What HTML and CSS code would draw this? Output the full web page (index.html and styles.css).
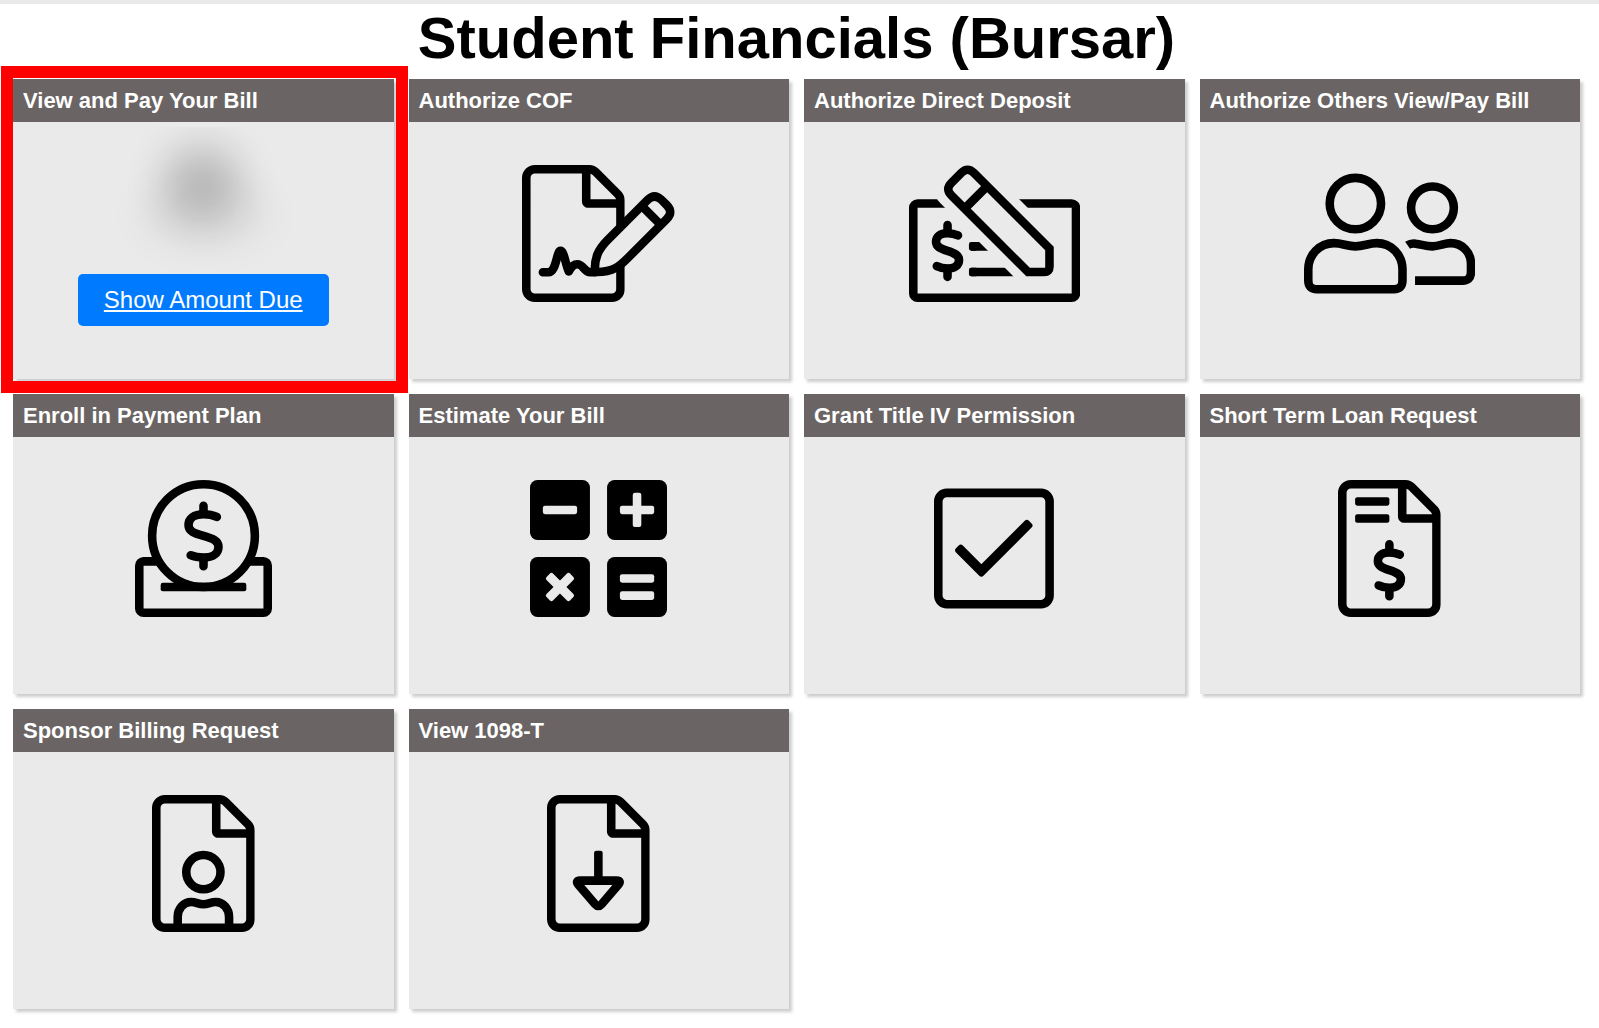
FILE: index.html
```html
<!DOCTYPE html>
<html lang="en">
<head>
  <meta charset="UTF-8">
  <meta name="viewport" content="width=device-width, initial-scale=1.0">
  <title>Student Financials (Bursar)</title>
  <link rel="stylesheet" href="styles.css">
</head>
<body>

  <!-- Shared icon parts -->
  <svg class="defs" width="0" height="0" aria-hidden="true">
    <symbol id="file" viewBox="0 0 384 512">
      <path fill="currentColor" d="M369.900 97.900L286 14C277 5 264.800 0 252.100 0H48C21.500 0 0 21.500 0 48v416c0 26.500 21.500 48 48 48h288c26.500 0 48-21.500 48-48V131.900c0-12.700-5.100-25-14.100-34zM347.300 120.600c2.100 2.100 3.500 4.600 4.200 7.400H256V32.500c2.800.7 5.300 2.100 7.400 4.200l83.900 83.900zM336 480H48c-8.800 0-16-7.200-16-16V48c0-8.800 7.200-16 16-16h176v104c0 13.300 10.700 24 24 24h104v304c0 8.800-7.200 16-16 16z"/>
    </symbol>
    <g id="dollar-small" class="line" stroke-linecap="round">
      <path d="M39 -58Q22 -66 0 -66C-28 -66 -43 -53 -43 -34C-43 -16 -28 -9 0 0C28 9 43 16 43 34C43 53 28 66 0 66Q-22 66 -40 57"/>
      <path d="M0 -97V-68M0 68V97"/>
    </g>
  </svg>

  <main class="page">
    <h1>Student Financials (Bursar)</h1>

    <div class="cards">
      <section class="card highlight">
        <h2>View and Pay Your Bill</h2>
        <div class="bill">
          <svg class="blurred" viewBox="0 0 300 147" aria-hidden="true">
            <ellipse cx="149" cy="56" rx="38" ry="38" opacity="0.2"/>
            <ellipse cx="152" cy="88" rx="66" ry="32" opacity="0.05"/>
          </svg>
          <a class="btn" href="#">Show Amount Due</a>
        </div>
      </section>

      <section class="card">
        <h2>Authorize COF</h2>
        <a class="icon" href="#" aria-label="Authorize COF">
          <svg viewBox="0 0 576 512">
            <use href="#file" width="384" height="512"/>
            <g class="line">
              <path stroke-linecap="round" stroke-linejoin="round" d="M78 401H98C130 401 128 321 144 321C158 321 162 372 175 398C186 378 194 371 206 371C232 371 230 401 256 401H272"/>
              <path class="filled" stroke-linejoin="round" d="M272 400C270 346 286 314 320 280L470 130Q495 105 521 130L541 150Q567 176 541 202L402 341C366 378 342 402 272 400Z"/>
              <path d="M446 151L520 225"/>
            </g>
          </svg>
        </a>
      </section>

      <section class="card">
        <h2>Authorize Direct Deposit</h2>
        <a class="icon" href="#" aria-label="Authorize Direct Deposit">
          <svg viewBox="0 0 640 512">
            <g class="line">
              <rect x="16" y="144" width="608" height="352" rx="16"/>
              <path d="M232 304H320M232 400H420"/>
            </g>
            <path d="M232 288h20v32h-20q-8 0-8-8v-16q0-8 8-8zM232 384h20v32h-20q-8 0-8-8v-16q0-8 8-8z"/>
            <use href="#dollar-small" x="144" y="321"/>
            <path class="gap" d="M445 400L152 107Q135 90 152 73L202 23Q219 6 236 23L525 312V384Q525 400 509 400Z"/>
            <g class="line">
              <path class="filled" d="M445 400L158 113Q135 90 158 67L196 29Q219 6 242 29L525 312V380Q525 400 505 400Z"/>
              <path d="M208 163L292 79"/>
            </g>
          </svg>
        </a>
      </section>

      <section class="card">
        <h2>Authorize Others View/Pay Bill</h2>
        <a class="icon" href="#" aria-label="Authorize Others View/Pay Bill">
          <svg viewBox="0 0 640 512">
            <g class="line">
              <circle cx="192" cy="144" r="96"/>
              <circle cx="480" cy="160" r="80"/>
              <path d="M16 390C16 336 58 292 112 292C144 292 160 304 192 304S240 292 272 292C326 292 368 336 368 390V432Q368 464 336 464H48Q16 464 16 432Z"/>
              <path d="M387 300Q400 291 418 294C440 297 455 304 480 304S525 292 548 292C592 292 624 326 624 370V400Q624 432 592 432H415"/>
            </g>
          </svg>
        </a>
      </section>

      <section class="card">
        <h2>Enroll in Payment Plan</h2>
        <a class="icon" href="#" aria-label="Enroll in Payment Plan">
          <svg viewBox="0 0 512 512">
            <g class="line">
              <rect x="16" y="304" width="480" height="192" rx="16"/>
              <circle class="filled" cx="256" cy="208" r="192"/>
              <g stroke-linecap="round">
                <path d="M306 138Q284 128 256 128C221 128 200 144 200 168C200 192 221 199 256 209C291 219 312 227 312 250C312 274 291 290 256 290Q228 290 208 281"/>
                <path d="M256 96V126M256 292V322"/>
              </g>
            </g>
            <rect x="96" y="384" width="320" height="32" rx="8"/>
          </svg>
        </a>
      </section>

      <section class="card">
        <h2>Estimate Your Bill</h2>
        <a class="icon" href="#" aria-label="Estimate Your Bill">
          <svg viewBox="0 0 512 512">
            <rect width="224" height="224" rx="28"/>
            <rect x="288" width="224" height="224" rx="28"/>
            <rect y="288" width="224" height="224" rx="28"/>
            <rect x="288" y="288" width="224" height="224" rx="28"/>
            <g class="cutout">
              <rect x="48" y="96" width="128" height="32" rx="8"/>
              <rect x="336" y="96" width="128" height="32" rx="8"/>
              <rect x="384" y="48" width="32" height="128" rx="8"/>
              <rect x="50" y="383" width="124" height="34" rx="8" transform="rotate(45 112 400)"/>
              <rect x="50" y="383" width="124" height="34" rx="8" transform="rotate(-45 112 400)"/>
              <rect x="336" y="352" width="128" height="32" rx="8"/>
              <rect x="336" y="416" width="128" height="32" rx="8"/>
            </g>
          </svg>
        </a>
      </section>

      <section class="card">
        <h2>Grant Title IV Permission</h2>
        <a class="icon" href="#" aria-label="Grant Title IV Permission">
          <svg viewBox="0 0 448 512">
            <rect class="line" x="16" y="48" width="416" height="416" rx="32"/>
            <path stroke="currentColor" stroke-width="22" stroke-linejoin="round" d="M90 263L177 350L357 170L347 160L177 330L100 253Z"/>
          </svg>
        </a>
      </section>

      <section class="card">
        <h2>Short Term Loan Request</h2>
        <a class="icon" href="#" aria-label="Short Term Loan Request">
          <svg viewBox="0 0 384 512">
            <use href="#file" width="384" height="512"/>
            <rect x="64" y="64" width="128" height="32" rx="8"/>
            <rect x="64" y="128" width="128" height="32" rx="8"/>
            <use href="#dollar-small" x="192" y="337"/>
          </svg>
        </a>
      </section>

      <section class="card">
        <h2>Sponsor Billing Request</h2>
        <a class="icon" href="#" aria-label="Sponsor Billing Request">
          <svg viewBox="0 0 384 512">
            <use href="#file" width="384" height="512"/>
            <g class="line">
              <circle cx="192" cy="288" r="64"/>
              <path d="M96 496V456C96 424 118 400 146 400C166 400 172 408 192 408S218 400 238 400C266 400 288 424 288 456V496"/>
            </g>
          </svg>
        </a>
      </section>

      <section class="card">
        <h2>View 1098-T</h2>
        <a class="icon" href="#" aria-label="View 1098-T">
          <svg viewBox="0 0 384 512">
            <use href="#file" width="384" height="512"/>
            <path d="M176 320V216q0-8 8-8h16q8 0 8 8V320z"/>
            <path class="line" d="M124 320H260Q280 320 266 336L204 408Q192 422 180 408L118 336Q104 320 124 320Z"/>
          </svg>
        </a>
      </section>
    </div>
  </main>

</body>
</html>
```

FILE: styles.css
```css
* {
  box-sizing: border-box;
}

body {
  background-color: white;
  color: black;
  font-family: "Liberation Sans", Arial, sans-serif;
  margin: 0;
  border-top: 4px solid #e9e9e9;
}

.defs {
  position: absolute;
}

.page {
  padding: 0 19px 18px 13px;
}

h1 {
  font-size: 58px;
  line-height: 68px;
  margin: 0 0 7px;
  text-align: center;
}

.cards {
  display: grid;
  grid-template-columns: repeat(4, 1fr);
  gap: 15px;
}

.card {
  min-height: 300px;
  background-color: #eaeaea;
  box-shadow: 3px 3px 3px rgba(0, 0, 0, 0.2);
}

.card h2 {
  margin: 0;
  padding: 0 10px;
  background-color: #6a6564;
  color: white;
  font-size: 22px;
  line-height: 43px;
}

/* red frame around the card to click */
.highlight {
  position: relative;
}

.highlight::after {
  content: "";
  position: absolute;
  inset: -13px -14px -14px -12px;
  border: 12px solid #ff0000;
  pointer-events: none;
}

.icon {
  display: flex;
  justify-content: center;
  padding-top: 43px;
  color: black;
}

.icon svg {
  height: 137px;
}

.line {
  fill: none;
  stroke: currentColor;
  stroke-width: 32px;
}

.filled,
.cutout {
  fill: #eaeaea;
}

.gap {
  fill: #eaeaea;
  stroke: #eaeaea;
  stroke-width: 100px;
}

.bill {
  display: flex;
  flex-direction: column;
  align-items: center;
}

.blurred {
  width: 300px;
  height: 147px;
  margin-top: 5px;
  overflow: hidden;
}

.blurred ellipse {
  filter: blur(20px);
}

.btn {
  padding: 0 26px;
  border-radius: 5px;
  background-color: #007bff;
  color: white;
  font-size: 24px;
  line-height: 52px;
  text-decoration: underline;
}

.btn:hover {
  background-color: #0069d9;
}
```
